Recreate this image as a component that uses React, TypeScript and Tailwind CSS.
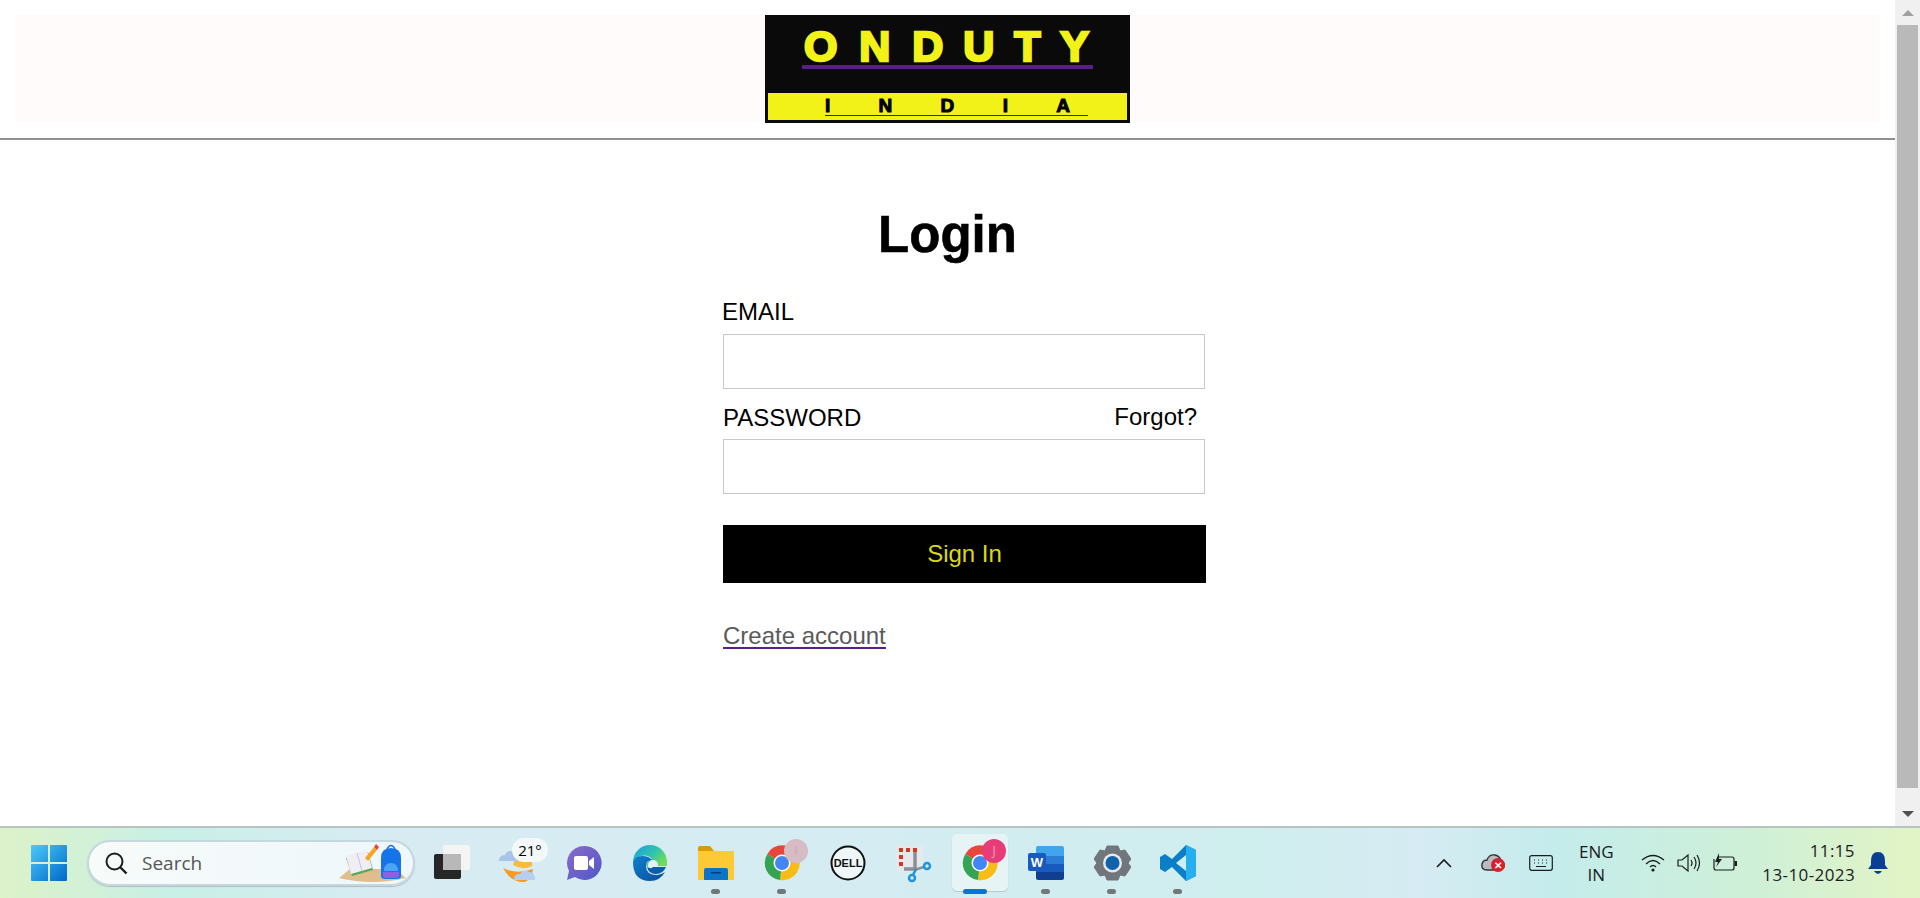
const fontArial = { fontFamily: '"Liberation Sans", Arial, sans-serif' };

const Logo = () => (
  <div className="w-[365px] h-[108px] bg-[#0a0a0a] flex flex-col font-['Liberation_Sans',sans-serif]">
    <div className="h-[78px] pt-[12px] pl-[37px]">
      <div className="w-[291px] h-[42px] flex justify-between items-end text-[#f2f218] border-b-4 border-[#5a1e8c] font-bold text-[43px] leading-[38px] [-webkit-text-stroke:2.5px_#f2f218]">
        <span className="pl-[2px]">O</span>
        <span className="pl-[2px]">N</span>
        <span className="pl-[2px]">D</span>
        <span>U</span>
        <span>T</span>
        <span className="pr-[4px]">Y</span>
      </div>
    </div>
    <div className="mx-[3px] mb-[3px] flex-1 bg-[#f2f218] pt-[3px] pl-[57px]">
      <div className="w-[263px] h-[20px] flex justify-between items-center pr-[18px] border-b border-[#3a2a4a] font-bold text-[19px] leading-none text-black [-webkit-text-stroke:1px_#000]">
        <span>I</span><span>N</span><span>D</span><span>I</span><span>A</span>
      </div>
    </div>
  </div>
);

const WinLogo = () => (
  <svg width="36" height="36" viewBox="0 0 36 36">
    <defs>
      <linearGradient id="win" x1="0" y1="0" x2="1" y2="1">
        <stop offset="0" stopColor="#4cc9fb" />
        <stop offset="1" stopColor="#0068c8" />
      </linearGradient>
    </defs>
    <path d="M1 0h16v17H0V1a1 1 0 0 1 1-1zM19 0h16a1 1 0 0 1 1 1v16H19zM0 19h17v17H1a1 1 0 0 1-1-1zM19 19h17v16a1 1 0 0 1-1 1H19z" fill="url(#win)" />
  </svg>
);

const SearchArt = () => (
  <svg width="68" height="38" viewBox="0 0 68 38" className="overflow-visible">
    <path d="M0 34 L11 25 H56 L67 34 Q34 42 0 34Z" fill="#e0bd8c" />
    <path d="M7 14 L29 8 L34 26 L13 32Z" fill="#58a85c" />
    <path d="M7 12 L28 6 L33 24 L12 30Z" fill="#f0edf4" />
    <path d="M18 9 L23 27" stroke="#c8c4d4" strokeWidth="1" />
    <path d="M26 14 L35 3 L38 6 L29 17Z" fill="#f5a623" />
    <path d="M35 3 L37 0 L40 3 L38 6Z" fill="#e8443a" />
    <path d="M42 14 Q42 4 52 4 Q62 4 62 14 V32 Q62 35 58 35 H46 Q42 35 42 32Z" fill="#1673ea" />
    <path d="M45 27 Q45 19 52 19 Q59 19 59 27Z" fill="#4da3f5" />
    <path d="M44 28 H60 V32 Q60 34 58 34 H46 Q44 34 44 32Z" fill="#8a62e0" />
    <path d="M48 5 Q52 -2 56 5" fill="none" stroke="#1673ea" strokeWidth="1.5" />
  </svg>
);

const TaskView = () => (
  <svg width="36" height="36" viewBox="0 0 36 36">
    <rect x="0" y="9" width="27" height="25" rx="2" fill="#262626" />
    <rect x="9" y="0" width="27" height="25" rx="2" fill="#f4f4f4" />
    <rect x="9" y="9" width="18" height="16" fill="#b8b8b8" />
  </svg>
);

const Weather = () => (
  <div className="relative w-[46px] h-[44px] left-[4px]">
    <svg width="46" height="44" viewBox="0 0 46 44" className="absolute left-0 top-0">
      <path d="M4 27 Q12 42 26 41 Q33 38 34 28 Q18 34 4 27Z" fill="#f59a22" />
      <path d="M14 24 Q24 30 33 25 V12 H18Z" fill="#f8bb3a" />
      <path d="M0 20 Q0 14 6 14 Q9 8 15 11 Q21 12 20 20Z" fill="#a8c4e8" />
      <path d="M15 39 Q15 32 21 33 Q25 27 30 31 Q36 31 36 39Z" fill="#b6cfee" />
    </svg>
    <div className="absolute left-[13px] top-[-3px] w-[36px] h-[24px] rounded-full bg-[#f3f8fa] flex items-center justify-center text-[15px] text-black font-['Open_Sans',sans-serif]">21°</div>
  </div>
);

const Chat = () => (
  <svg width="36" height="36" viewBox="0 0 36 36">
    <defs>
      <linearGradient id="chat" x1="0" y1="0" x2="1" y2="1">
        <stop offset="0" stopColor="#8a6ac8" />
        <stop offset="1" stopColor="#5058c8" />
      </linearGradient>
    </defs>
    <path d="M18 1 A17 17 0 1 1 9 32 L1 35 L3 26 A17 17 0 0 1 18 1Z" fill="url(#chat)" />
    <rect x="8" y="11" width="14" height="14" rx="2" fill="#fff" />
    <path d="M23 16 L28 12 V24 L23 20Z" fill="#fff" />
  </svg>
);

const Edge = () => (
  <svg width="36" height="36" viewBox="0 0 36 36">
    <defs>
      <linearGradient id="edgeA" x1="0" y1="0" x2="1" y2="0.6">
        <stop offset="0" stopColor="#1aa0e0" />
        <stop offset="0.6" stopColor="#2fc2b0" />
        <stop offset="1" stopColor="#6fdc5c" />
      </linearGradient>
      <linearGradient id="edgeB" x1="0" y1="0" x2="1" y2="1">
        <stop offset="0" stopColor="#0f7fd0" />
        <stop offset="1" stopColor="#0a4e98" />
      </linearGradient>
    </defs>
    <path d="M1 17 A17 17 0 0 1 35 17 V21 H14 Q15 15 20 14 Q16 9 9 11 Q3 13 1 17Z" fill="url(#edgeA)" />
    <path d="M1 17 Q3 11 10 11 Q17 11 20 15 Q14 15 14 21 Q14 30 25 30 Q29 30 33 27 Q28 36 18 36 Q1 36 1 17Z" fill="url(#edgeB)" />
    <circle cx="21" cy="20" r="5" fill="#e4f2f6" />
    <path d="M15 21 Q16 29 24 29 Q31 29 34 22 H21 Q18 25 15 21Z" fill="#0d5ca8" />
  </svg>
);

const Folder = () => (
  <svg width="36" height="34" viewBox="0 0 36 34">
    <path d="M0 2 Q0 0 2 0 H12 L16 5 H36 V14 H0Z" fill="#d99b0c" />
    <rect x="0" y="5" width="36" height="29" fill="#fdc934" />
    <path d="M6 24 Q6 22 8 22 H28 Q30 22 30 24 V34 H6Z" fill="#0c74c8" />
    <rect x="13" y="26" width="10" height="1.5" fill="#063c78" />
  </svg>
);

const ChromeLogo = () => (
  <svg width="36" height="36" viewBox="0 0 36 36">
    <path d="M18 18 L3.4 9 A17 17 0 0 1 33 9 Z" fill="#e8453c" />
    <path d="M18 18 L33 9 A17 17 0 0 1 16 35 Z" fill="#f9bc15" />
    <path d="M18 18 L16 35 A17 17 0 0 1 3.4 9 Z" fill="#34a353" />
    <circle cx="18" cy="18" r="8.5" fill="#fff" />
    <circle cx="18" cy="18" r="7" fill="#4285f4" />
  </svg>
);

const Dell = () => (
  <svg width="36" height="36" viewBox="0 0 36 36">
    <circle cx="18" cy="18" r="16.5" fill="#eef6f8" stroke="#111" strokeWidth="2" />
    <text x="18" y="22" textAnchor="middle" fontSize="11" fontWeight="700" fill="#111" fontFamily="Liberation Sans, sans-serif">DELL</text>
  </svg>
);

const Snip = () => (
  <svg width="36" height="36" viewBox="0 0 36 36" className="overflow-visible">
    <rect x="0" y="0" width="27" height="27" rx="2" fill="#e4eaec" />
    <g fill="#d8361e">
      <rect x="3" y="3" width="4" height="4" /><rect x="10" y="3" width="4" height="4" /><rect x="17" y="3" width="4" height="4" />
      <rect x="3" y="10" width="4" height="4" /><rect x="3" y="17" width="4" height="4" />
    </g>
    <path d="M19 7 V24 H8" fill="none" stroke="#8a8f92" strokeWidth="3.5" />
    <path d="M18 25 L28 22" stroke="#8a8f92" strokeWidth="2.5" />
    <path d="M20 24 L17 30" stroke="#1f93dc" strokeWidth="2.5" />
    <circle cx="31" cy="21" r="3" fill="none" stroke="#1f93dc" strokeWidth="2.5" />
    <circle cx="16" cy="33" r="3" fill="none" stroke="#1f93dc" strokeWidth="2.5" />
  </svg>
);

const Word = () => (
  <svg width="36" height="34" viewBox="0 0 36 34">
    <path d="M8 2 Q8 0 10 0 H34 Q36 0 36 2 V10 H8Z" fill="#41a5ee" />
    <rect x="8" y="10" width="28" height="8" fill="#2b7cd3" />
    <rect x="8" y="18" width="28" height="8" fill="#185abd" />
    <path d="M8 26 H36 V32 Q36 34 34 34 H10 Q8 34 8 32Z" fill="#103f91" />
    <rect x="0" y="7" width="18" height="18" rx="2" fill="#185abd" />
    <text x="9" y="21" textAnchor="middle" fontSize="13" fontWeight="700" fill="#fff" fontFamily="Liberation Sans, sans-serif">W</text>
  </svg>
);

const Gear = () => (
  <svg width="37" height="36" viewBox="0 0 37 36">
    <path d="M13 1 H24 L26 6 L31 5 L37 14 L34 18 L37 22 L31 31 L26 30 L24 35 H13 L11 30 L6 31 L0 22 L3 18 L0 14 L6 5 L11 6Z" fill="#70767c" strokeLinejoin="round" stroke="#70767c" strokeWidth="1" />
    <circle cx="18.5" cy="18" r="9.5" fill="#e6e9ea" />
    <circle cx="18.5" cy="18" r="7" fill="#0f62ac" />
  </svg>
);

const VsCode = () => (
  <svg width="36" height="36" viewBox="0 0 36 36">
    <path d="M26 0 L36 5 V31 L26 36 L12 22 L5 27 L0 24 V12 L5 9 L12 14Z M26 10 L16 18 L26 26Z" fill="#0a7fc8" fillRule="evenodd" />
    <path d="M26 0 L36 5 V31 L26 36Z" fill="#25aef0" />
  </svg>
);

const ProfileDot = ({ bg, text, letter }: { bg: string; text: string; letter: string }) => (
  <div className={`absolute right-[-8px] top-[-6px] w-[24px] h-[24px] rounded-full flex items-center justify-center text-[12px] font-['Open_Sans',sans-serif] ${bg} ${text}`}>{letter}</div>
);

const Slot = ({ children, dot }: { children: React.ReactNode; dot?: boolean }) => (
  <div className="relative w-[66px] h-full flex items-center justify-center">
    {children}
    {dot && <div className="absolute left-[28px] bottom-[4px] w-[9px] h-[5px] rounded-full bg-[#707878]" />}
  </div>
);

const Tray = () => (
  <div className="ml-auto flex items-center h-full text-[#1c1c1c] font-['Open_Sans',sans-serif]">
    <svg width="18" height="12" viewBox="0 0 18 12" className="mr-[28px]">
      <path d="M2 10 L9 3 L16 10" fill="none" stroke="#1c1c1c" strokeWidth="1.6" />
    </svg>
    <div className="relative w-[24px] h-[20px] mr-[24px]">
      <svg width="24" height="18" viewBox="0 0 24 18">
        <path d="M6 17 Q0 17 1 11 Q2 7 6 7 Q8 1 14 2 Q19 3 20 8 Q24 9 23 14 L20 17Z" fill="#b8bcc0" stroke="#333" strokeWidth="1.4" />
      </svg>
      <div className="absolute left-[10px] top-[5px] w-[14px] h-[14px] rounded-full bg-[#d8202c] flex items-center justify-center text-white text-[10px] leading-none font-bold">✕</div>
    </div>
    <svg width="24" height="16" viewBox="0 0 24 16" className="mr-[20px]">
      <rect x="0.7" y="0.7" width="22.6" height="14.6" rx="2" fill="none" stroke="#1c1c1c" strokeWidth="1.2" />
      <path d="M5 5h1M9 5h1M13 5h1M17 5h1M5 8h1M9 8h1M13 8h1M17 8h1M7 11.5h10" stroke="#1c1c1c" strokeWidth="1.2" />
    </svg>
    <div className="w-[46px] text-center text-[17px] leading-[23px] mr-[22px]">
      <div>ENG</div>
      <div>IN</div>
    </div>
    <svg width="24" height="18" viewBox="0 0 24 18" className="mr-[12px]">
      <path d="M1 6 Q12 -3 23 6M5 10 Q12 3 19 10M9 13 Q12 10 15 13" fill="none" stroke="#1c1c1c" strokeWidth="1.3" />
      <circle cx="12" cy="16" r="1.6" fill="#1c1c1c" />
    </svg>
    <svg width="24" height="20" viewBox="0 0 24 20" className="mr-[12px]">
      <path d="M1 7 H5 L11 2 V18 L5 13 H1Z" fill="none" stroke="#1c1c1c" strokeWidth="1.2" />
      <path d="M14 7 Q16 10 14 13M17 4 Q21 10 17 16M20 2 Q25 10 20 18" fill="none" stroke="#1c1c1c" strokeWidth="1.2" />
    </svg>
    <svg width="24" height="20" viewBox="0 0 24 20" className="mr-[25px]">
      <path d="M5 4 H19 Q21 4 21 6 V15 Q21 17 19 17 H3 Q1 17 1 15 V6" fill="none" stroke="#1c1c1c" strokeWidth="1.2" />
      <rect x="21.5" y="8" width="2.5" height="5" fill="#1c1c1c" />
      <path d="M6 0 L2 9 H5 L3 14 L9 6 H6Z" fill="#1c1c1c" />
    </svg>
    <div className="text-right text-[17px] leading-[24px] tracking-[0.4px]">
      <div>11:15</div>
      <div>13-10-2023</div>
    </div>
    <svg width="20" height="24" viewBox="0 0 20 24" className="ml-[13px] mr-[32px]">
      <path d="M10 1 Q17 1 17 10 V14 L20 18 H0 L3 14 V10 Q3 1 10 1Z" fill="#0a3f94" />
      <path d="M6 20 H14 Q12 23 10 23 Q8 23 6 20Z" fill="#0a3f94" />
    </svg>
  </div>
);

const Taskbar = () => (
  <div className="h-[72px] shrink-0 flex items-center border-t-2 border-[#b8c4c4] bg-[linear-gradient(90deg,#dcf2c8_0%,#c8f0e6_9%,#d8ebf3_20%,#d4ecf2_45%,#cfeeee_65%,#d6ebf3_74%,#c4ecec_81%,#cef0d8_91%,#e2f4c4_100%)]">
    <div className="ml-[31px] w-[36px] h-[36px]"><WinLogo /></div>
    <div className="ml-[20px] w-[328px] h-[46px] rounded-full bg-[linear-gradient(90deg,#f7fbfa,#eef7fb)] border-2 border-[#c5d8de] flex items-center pl-[15px] pr-[6px] shadow-[0_1px_1px_#b0bcc4]">
      <svg width="24" height="24" viewBox="0 0 24 24">
        <circle cx="10.5" cy="10.5" r="8" fill="none" stroke="#1c1c1c" strokeWidth="2" />
        <path d="M16 16 L22.5 22.5" stroke="#1c1c1c" strokeWidth="2.4" />
      </svg>
      <span className="ml-[14px] text-[19px] text-[#555] font-['Open_Sans',sans-serif]">Search</span>
      <div className="ml-auto"><SearchArt /></div>
    </div>
    <div className="ml-[4px] flex items-center h-full">
      <Slot><TaskView /></Slot>
      <Slot><Weather /></Slot>
      <Slot><Chat /></Slot>
      <Slot><Edge /></Slot>
      <Slot dot><Folder /></Slot>
      <Slot dot>
        <div className="relative w-[36px] h-[36px]">
          <ChromeLogo />
          <ProfileDot bg="bg-[#d6bcc4]" text="text-[#c9a8b0]" letter="I" />
        </div>
      </Slot>
      <Slot><Dell /></Slot>
      <Slot><Snip /></Slot>
      <div className="relative w-[66px] h-full flex items-center justify-center">
        <div className="absolute left-[5px] top-[6px] w-[56px] h-[57px] rounded-[5px] bg-[#e6f4f6] shadow-[0_1px_1px_#b8c8c8]" />
        <div className="relative w-[36px] h-[36px]">
          <ChromeLogo />
          <ProfileDot bg="bg-[#e83c78]" text="text-[#f4a0bc]" letter="J" />
        </div>
        <div className="absolute left-[16px] bottom-[4px] w-[24px] h-[5px] rounded-full bg-[#0078d4]" />
      </div>
      <Slot dot><Word /></Slot>
      <Slot dot><Gear /></Slot>
      <Slot dot><VsCode /></Slot>
    </div>
    <Tray />
  </div>
);

const Scrollbar = () => (
  <div className="w-[25px] shrink-0 bg-[#f0f0f0] flex flex-col items-center">
    <div className="h-[25px] flex items-center justify-center">
      <div className="w-0 h-0 border-x-[6px] border-x-transparent border-b-[6px] border-b-[#a0a0a0]" />
    </div>
    <div className="w-[21px] flex-1 bg-[#b9b9b9]" />
    <div className="h-[38px] flex items-center justify-center pt-[13px]">
      <div className="w-0 h-0 border-x-[6px] border-x-transparent border-t-[6px] border-t-[#505050]" />
    </div>
  </div>
);

export default function App() {
  return (
    <div className="h-[898px] flex flex-col overflow-hidden bg-white" style={fontArial}>
      <div className="flex-1 flex min-h-0">
        <main className="flex-1">
          <div className="pt-[15px] px-[15px]">
            <div className="h-[107px] bg-[#fffbfa] flex justify-center">
              <div className="h-[108px]"><Logo /></div>
            </div>
          </div>
          <div className="mt-[16px] h-[2px] bg-[#909090]" />
          <h1 className="mt-[64px] text-center text-[51px] leading-[62px] font-bold text-black [-webkit-text-stroke:0.6px_#000]">Login</h1>
          <form className="ml-[723px] w-[483px] mt-[32px] text-[24px] leading-[28px] text-black">
            <label className="block -ml-[1px]">EMAIL</label>
            <input className="block mt-[8px] w-[482px] h-[55px] border border-[#c8c8c8] bg-white" />
            <div className="mt-[15px] flex justify-between pr-[9px]">
              <label>PASSWORD</label>
              <a className="-mt-px">Forgot?</a>
            </div>
            <input type="password" className="block mt-[7px] w-[482px] h-[55px] border border-[#c8c8c8] bg-white" />
            <button type="button" className="block mt-[31px] w-[483px] h-[58px] bg-black text-[#d8d818]">Sign In</button>
            <a className="mt-[42px] inline-block text-[#5a5a5a] border-b-2 border-[#5a1e8c] leading-[22px]">Create account</a>
          </form>
        </main>
        <Scrollbar />
      </div>
      <Taskbar />
    </div>
  );
}
